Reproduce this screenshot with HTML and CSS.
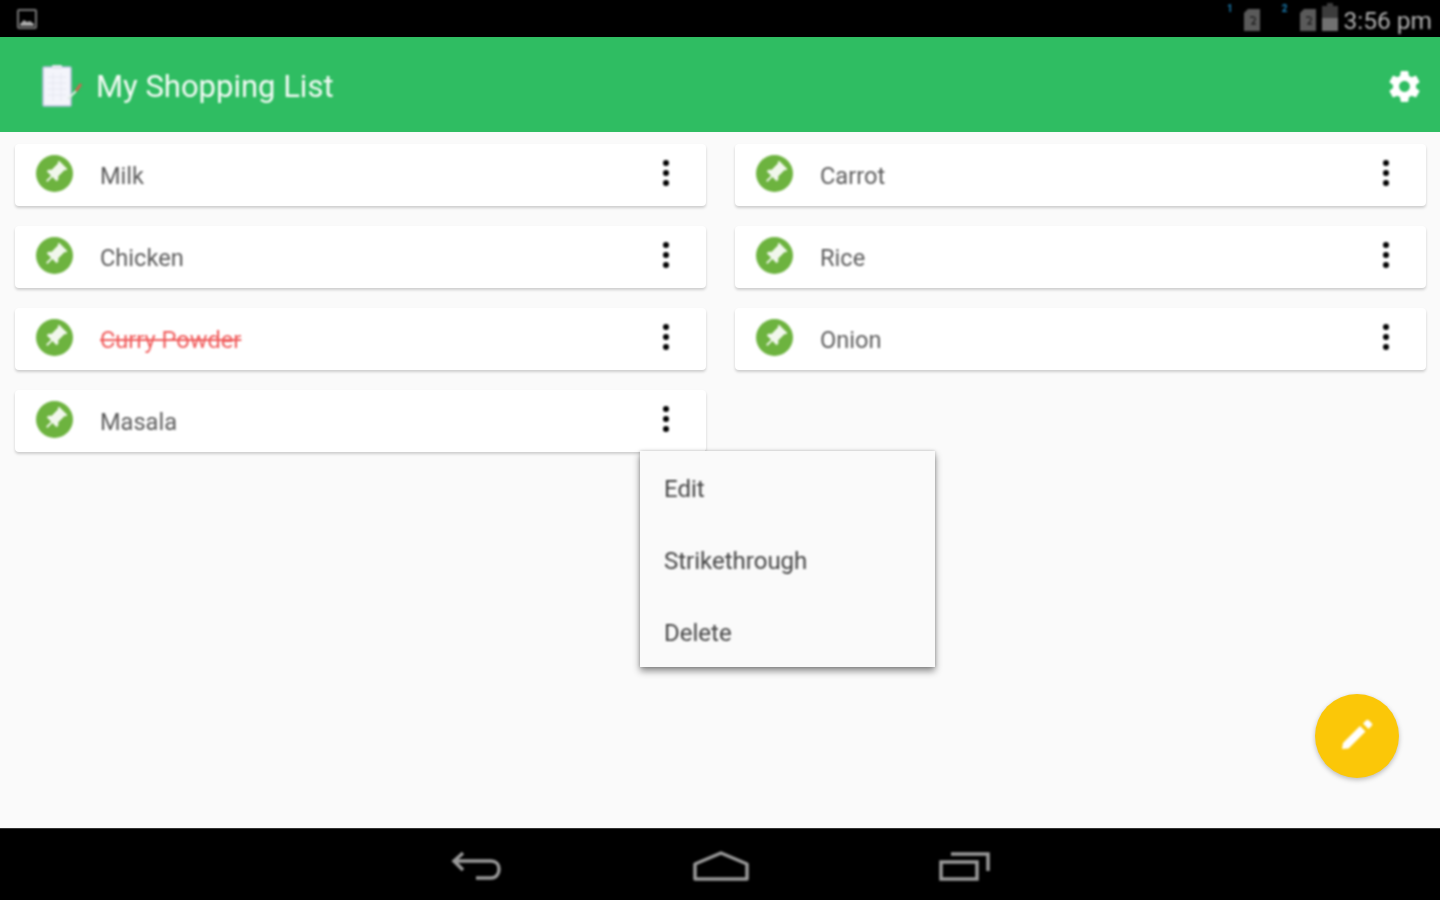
FILE: index.html
```html
<!DOCTYPE html>
<html lang="en">
<head>
    <meta charset="UTF-8">
    <meta name="viewport" content="width=device-width, initial-scale=1.0">
    <title>My Shopping List</title>
    <link rel="stylesheet" href="styles.css">
</head>
<body>
    <svg class="defs" width="0" height="0">
        <symbol id="pin" viewBox="0 0 24 24">
            <path transform="rotate(45 12 12)" d="M16 12V4h1V2H7v2h1v8l-2 2v2h5.200v6h1.600v-6H18v-2l-2-2z"/>
        </symbol>
        <symbol id="sim" viewBox="0 0 16 22">
            <path d="M4 0h12v22H0V4z"/>
            <path d="M6 8h4a2 2 0 0 1 1 3l-3 4h4" fill="none" stroke="#222" stroke-width="1.300"/>
        </symbol>
    </svg>

    <div class="status-bar">
        <svg class="status-photo" width="20" height="20" viewBox="0 0 20 20">
            <rect x="1" y="1" width="18" height="18" rx="1" fill="none" stroke="#777" stroke-width="2"/>
            <path d="M3 15l4-4 3 2 3-1 4 3v2H3z" fill="#aaa"/>
        </svg>
        <div class="status-right">
            <span class="sim-no">1</span>
            <svg class="sim" width="16" height="22"><use href="#sim"/></svg>
            <span class="sim-no sim-no-2">2</span>
            <svg class="sim sim-2" width="16" height="22"><use href="#sim"/></svg>
            <svg class="battery" width="16" height="28" viewBox="0 0 16 28">
                <path d="M5 0h6v3h5v25H0V3h5z" fill="#3c3c3c"/>
                <rect y="15" width="16" height="13" fill="#707070"/>
            </svg>
            <span class="clock">3:56 pm</span>
        </div>
    </div>

    <header class="app-bar">
        <svg class="logo" width="40" height="44" viewBox="0 0 40 44">
            <rect x="1" y="2" width="28" height="39" rx="1" fill="#f4f5fb" stroke="#b9bfe0" stroke-width="1.500"/>
            <rect x="10" y="0" width="10" height="4" rx="1" fill="#e3e5ee"/>
            <path d="M6 12h18M6 18h18M6 24h18M6 30h18M11 8v28M19 8v28" stroke="#e6e8f2" stroke-width="1"/>
            <path d="M26 34l8-8" stroke="#dfeee3" stroke-width="2"/>
            <path d="M34 26l5-7" stroke="#d9604f" stroke-width="2.500"/>
        </svg>
        <h1>My Shopping List</h1>
        <svg class="gear" width="37" height="37" viewBox="0 0 24 24">
            <path fill-rule="evenodd" d="M19.43 12.98c.04-.32.07-.64.07-.98s-.03-.66-.07-.98l2.11-1.65c.19-.15.24-.42.12-.64l-2-3.46c-.12-.22-.39-.3-.61-.22l-2.49 1c-.52-.4-1.08-.73-1.69-.98l-.38-2.65C14.46 2.18 14.25 2 14 2h-4c-.25 0-.46.18-.49.42l-.38 2.65c-.61.25-1.17.59-1.69.98l-2.49-1c-.23-.09-.49 0-.61.22l-2 3.46c-.13.22-.07.49.12.64l2.11 1.65c-.04.32-.07.65-.07.98s.03.66.07.98l-2.11 1.65c-.19.15-.24.42-.12.64l2 3.46c.12.22.39.3.61.22l2.49-1c.52.4 1.08.73 1.69.98l.38 2.65c.03.24.24.42.49.42h4c.25 0 .46-.18.49-.42l.38-2.65c.61-.25 1.17-.59 1.69-.98l2.49 1c.23.09.49 0 .61-.22l2-3.46c.12-.22.07-.49-.12-.64l-2.11-1.65zM12 15.500c-1.93 0-3.500-1.57-3.500-3.500s1.57-3.500 3.500-3.500 3.500 1.57 3.500 3.500-1.57 3.500-3.500 3.500z"/>
        </svg>
    </header>

    <main class="content">
        <div class="items">
            <div class="item">
                <span class="pin-badge"><svg width="28" height="28"><use href="#pin"/></svg></span>
                <span class="item-name">Milk</span>
                <span class="kebab"><i></i><i></i><i></i></span>
            </div>
            <div class="item">
                <span class="pin-badge"><svg width="28" height="28"><use href="#pin"/></svg></span>
                <span class="item-name">Carrot</span>
                <span class="kebab"><i></i><i></i><i></i></span>
            </div>
            <div class="item">
                <span class="pin-badge"><svg width="28" height="28"><use href="#pin"/></svg></span>
                <span class="item-name">Chicken</span>
                <span class="kebab"><i></i><i></i><i></i></span>
            </div>
            <div class="item">
                <span class="pin-badge"><svg width="28" height="28"><use href="#pin"/></svg></span>
                <span class="item-name">Rice</span>
                <span class="kebab"><i></i><i></i><i></i></span>
            </div>
            <div class="item">
                <span class="pin-badge"><svg width="28" height="28"><use href="#pin"/></svg></span>
                <span class="item-name item-done">Curry Powder</span>
                <span class="kebab"><i></i><i></i><i></i></span>
            </div>
            <div class="item">
                <span class="pin-badge"><svg width="28" height="28"><use href="#pin"/></svg></span>
                <span class="item-name">Onion</span>
                <span class="kebab"><i></i><i></i><i></i></span>
            </div>
            <div class="item">
                <span class="pin-badge"><svg width="28" height="28"><use href="#pin"/></svg></span>
                <span class="item-name">Masala</span>
                <span class="kebab"><i></i><i></i><i></i></span>
            </div>
        </div>

        <ul class="popup-menu">
            <li>Edit</li>
            <li>Strikethrough</li>
            <li>Delete</li>
        </ul>

        <button class="fab">
            <svg width="84" height="84" viewBox="0 0 84 84">
                <path d="M27 55l1-6 17-17 5.500 5.500-17 17z" fill="#fff"/>
                <path d="M48 29.500l3-3a2 2 0 0 1 3 0l2.500 2.500a2 2 0 0 1 0 3l-3 3z" fill="#fff"/>
            </svg>
        </button>
    </main>

    <nav class="nav-bar">
        <svg width="52" height="32" viewBox="0 0 52 32">
            <path d="M12 2L3 10l9 9M3 10h37c5 0 8 3 8 8s-3 9-8 9H25" fill="none" stroke="#9a9a9a" stroke-width="3.500"/>
        </svg>
        <svg width="56" height="32" viewBox="0 0 56 32">
            <path d="M2 28V13L28 2l26 11v15z" fill="none" stroke="#9a9a9a" stroke-width="3.500" stroke-linejoin="round"/>
        </svg>
        <svg width="52" height="32" viewBox="0 0 52 32">
            <rect x="2" y="11" width="36" height="17" fill="none" stroke="#9a9a9a" stroke-width="3.500"/>
            <path d="M12 3h37v17" fill="none" stroke="#9a9a9a" stroke-width="3.500"/>
        </svg>
    </nav>
</body>
</html>
```

FILE: styles.css
```css
* { box-sizing: border-box; }
body { margin: 0; height: 900px; display: flex; flex-direction: column; font-family: Roboto, sans-serif; background: #fafafa; overflow: hidden; }
.defs { position: absolute; }

.status-bar { height: 37px; flex: none; background: #000; display: flex; align-items: center; justify-content: space-between; padding: 0 8px 0 17px; }
.status-photo { filter: blur(0.8px); }
.status-right { display: flex; align-items: center; height: 100%; }
.sim { fill: #5a5a5a; margin-top: 2px; filter: blur(0.8px); }
.sim-2 { margin-right: 6px; }
.sim-no { color: #1b7fb5; font-size: 10px; font-weight: 700; align-self: flex-start; margin: 3px 11px 0 0; filter: blur(0.8px); }
.sim-no-2 { margin: 3px 13px 0 22px; }
.battery { margin-right: 5px; margin-top: -3px; filter: blur(0.8px); }
.clock { color: #b0b0b0; font-size: 24.5px; margin-top: 3px; filter: blur(0.8px); }

.app-bar { height: 95px; flex: none; background: #2fbd62; display: flex; align-items: center; padding: 4px 17px 0 42px; }
.logo { margin-right: 14px; filter: blur(0.8px); }
.app-bar h1 { margin: 0; font-size: 31px; font-weight: 400; color: #f4fbf6; flex: 1; filter: blur(0.8px); }
.gear { fill: #fff; filter: blur(0.8px); }

.content { flex: 1; position: relative; }
.items { display: grid; grid-template-columns: 691px 691px; column-gap: 29px; row-gap: 20px; padding: 12px 0 0 15px; }
.item { height: 62px; background: #fff; border-radius: 4px; box-shadow: 0 2px 3px rgba(0, 0, 0, 0.18); display: flex; align-items: center; padding: 0 37px 4px 21px; }
.pin-badge { width: 37px; height: 37px; border-radius: 50%; background: #6db33f; fill: #f1f7ec; display: flex; align-items: center; justify-content: center; filter: blur(0.8px); }
.item-name { flex: 1; margin-left: 27px; padding-top: 6px; font-size: 23.6px; color: #5c5c5c; filter: blur(0.8px); }
.item-done { color: #f05c5c; text-decoration: line-through; }
.kebab { display: flex; flex-direction: column; gap: 4px; filter: blur(0.8px); }
.kebab i { width: 6px; height: 6px; border-radius: 50%; background: #000; }

.popup-menu { position: absolute; left: 640px; top: 319px; width: 295px; height: 216px; margin: 0; padding: 0; list-style: none; background: #fafafa; box-shadow: 0 4px 7px rgba(0, 0, 0, 0.45), 0 0 3px rgba(0, 0, 0, 0.2); }
.popup-menu li { height: 72px; padding-left: 24px; line-height: 76px; font-size: 24px; color: #444; filter: blur(0.8px); }

.fab { position: absolute; left: 1315px; top: 562px; width: 84px; height: 84px; padding: 0; border: none; border-radius: 50%; background: #fbc708; box-shadow: 0 2px 5px rgba(0, 0, 0, 0.25); }
.fab svg { display: block; filter: blur(0.8px); }

.nav-bar { height: 72px; flex: none; background: #000; border-top: 1px solid #333; display: flex; align-items: flex-start; justify-content: center; gap: 190px; padding: 22px 0 0 2px; }
.nav-bar svg { filter: blur(0.8px); }
```
